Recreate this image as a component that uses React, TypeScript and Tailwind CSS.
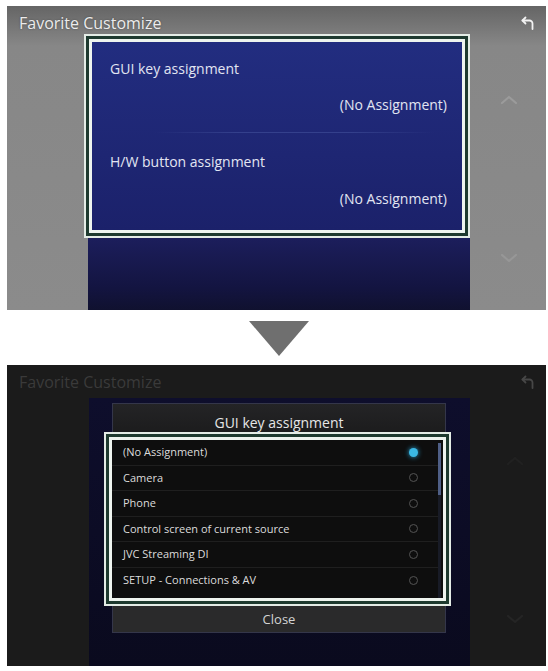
import React from "react";

const font = { fontFamily: '"Open Sans", "Liberation Sans", sans-serif' };

function BackIcon({ color }: { color: string }) {
  return (
    <svg width="15" height="14" viewBox="0 0 15 14" fill="none" stroke={color} strokeWidth="1.8" strokeLinecap="round" strokeLinejoin="round">
      <path d="M2.5 4.5 H9.5 A3 3 0 0 1 12.5 7.5 V13" />
      <path d="M5.5 1.5 L2.5 4.5 L5.5 7.5" />
    </svg>
  );
}

function Chevron({ up, color }: { up?: boolean; color: string }) {
  return (
    <svg width="18" height="10" viewBox="0 0 18 10" fill="none" stroke={color} strokeWidth="2.2" strokeLinecap="round" strokeLinejoin="round">
      {up ? <path d="M2 8 L9 2 L16 8" /> : <path d="M2 2 L9 8 L16 2" />}
    </svg>
  );
}

function Frame({ children, className }: { children: React.ReactNode; className?: string }) {
  return (
    <div className={"border-2 border-[#e4ece6] " + (className ?? "")}>
      <div className="border-[3px] border-[#1e3a2f] h-full">
        <div className="border-[3px] border-[#eef4ef] h-full">{children}</div>
      </div>
    </div>
  );
}

const items = [
  "(No Assignment)",
  "Camera",
  "Phone",
  "Control screen of current source",
  "JVC Streaming DI",
  "SETUP - Connections & AV",
];

export default function App() {
  return (
    <div className="w-[548px] h-[671px] bg-white overflow-hidden pt-[6px]" style={font}>
      {/* Top screen */}
      <div className="ml-[7px] w-[539px] h-[304px] flex flex-col bg-[linear-gradient(to_bottom,#656565_0px,#878787_40px,#8b8b8b_100%)]">
        <div className="h-[28px] flex items-center justify-between pt-[6px] pl-[12px] pr-[11px]">
          <span className="text-[16px] leading-[22px] text-[#ececec] [text-shadow:0_0_2px_rgba(0,0,0,0.4)]">Favorite Customize</span>
          <BackIcon color="#f2f2f2" />
        </div>
        <div className="flex flex-1">
          <div className="w-[77px]" />
          <div className="w-[386px] flex flex-col">
            <Frame className="h-[204px]">
              <div className="h-full flex flex-col bg-[linear-gradient(to_bottom,#222d80,#1e2673_60%,#1b216a)] text-[#e2e5f2] text-[14px]">
                <div className="h-[90px] flex flex-col pl-[18px] pr-[15px] pt-[18px]">
                  <div className="leading-[18px]">GUI key assignment</div>
                  <div className="leading-[18px] mt-[18px] text-right">(No Assignment)</div>
                </div>
                <div className="h-px ml-[62px] mr-[28px] bg-[linear-gradient(to_right,transparent,#34408c_30%,#34408c_70%,transparent)]" />
                <div className="flex-1 flex flex-col pl-[18px] pr-[15px] pt-[20px]">
                  <div className="leading-[18px]">H/W button assignment</div>
                  <div className="leading-[18px] mt-[19px] text-right">(No Assignment)</div>
                </div>
              </div>
            </Frame>
            <div className="ml-[4px] flex-1 bg-[linear-gradient(to_bottom,#1c1e5c,#131440_70%,#10112f)]" />
          </div>
          <div className="flex-1 flex flex-col items-center pl-[2px]">
            <div className="mt-[61px]">
              <Chevron up color="#9b9b9b" />
            </div>
            <div className="mt-[148px]">
              <Chevron color="#979797" />
            </div>
          </div>
        </div>
      </div>

      {/* Arrow */}
      <div className="h-[55px] pt-[11px] pl-[249px]">
        <svg width="60" height="35" viewBox="0 0 60 35">
          <polygon points="0,0 60,0 30,35" fill="#6f6f6f" />
        </svg>
      </div>

      {/* Bottom screen */}
      <div className="ml-[7px] w-[539px] h-[301px] flex flex-col bg-[#1b1b1b]">
        <div className="h-[33px] flex items-start justify-between pt-[6px] pl-[12px] pr-[11px]">
          <span className="text-[16px] leading-[22px] text-[#3a3a3a]">Favorite Customize</span>
          <div className="pt-[4px]">
            <BackIcon color="#474747" />
          </div>
        </div>
        <div className="flex flex-1">
          <div className="w-[82px]" />
          <div className="w-[381px] bg-[linear-gradient(to_bottom,#0e0e2c,#0a0a1e)] pt-[5px] pl-[23px]">
            <div className="w-[334px] h-[230px] border border-[#34364a] bg-[#1c1c1d] flex flex-col">
              <div className="h-[28px] flex justify-center pt-[8px] bg-[linear-gradient(to_bottom,#242426,#1c1c1d)]">
                <span className="text-[14px] leading-[21px] text-[#e6e6e6] font-medium">GUI key assignment</span>
              </div>
              <Frame className="ml-[-9px] mr-[-6px] h-[174px]">
                <div className="h-full bg-[#0e0e0e] flex">
                  <div className="flex-1 flex flex-col">
                    {items.map((t, i) => (
                      <div
                        key={t}
                        className={
                          "h-[25.5px] flex items-center justify-between pl-[11px] pr-[20px] " +
                          (i < items.length - 1 ? "border-b border-[#1f1f1f]" : "")
                        }
                      >
                        <span className="text-[11px] font-medium text-[#dcdcdc] leading-[14px]">{t}</span>
                        {i === 0 ? (
                          <span className="w-[9px] h-[9px] rounded-full bg-[#3bb8e4] shadow-[0_0_5px_#2aa6d8]" />
                        ) : (
                          <span className="w-[9px] h-[9px] rounded-full border-[1.5px] border-[#545454]" />
                        )}
                      </div>
                    ))}
                  </div>
                  <div className="w-[3px] mr-[2px] flex flex-col">
                    <div className="h-[52px] mt-[3px] bg-[#4f5f86]" />
                    <div className="flex-1 bg-[#181b26]" />
                  </div>
                </div>
              </Frame>
              <div className="flex-1 flex items-center justify-center bg-[#2a2a2b]">
                <span className="text-[13px] leading-[18px] text-[#d4d4d4]">Close</span>
              </div>
            </div>
          </div>
          <div className="flex-1 flex flex-col items-center pl-[14px]">
            <div className="mt-[58px]">
              <Chevron up color="#212121" />
            </div>
            <div className="mt-[148px]">
              <Chevron color="#252525" />
            </div>
          </div>
        </div>
      </div>
    </div>
  );
}
